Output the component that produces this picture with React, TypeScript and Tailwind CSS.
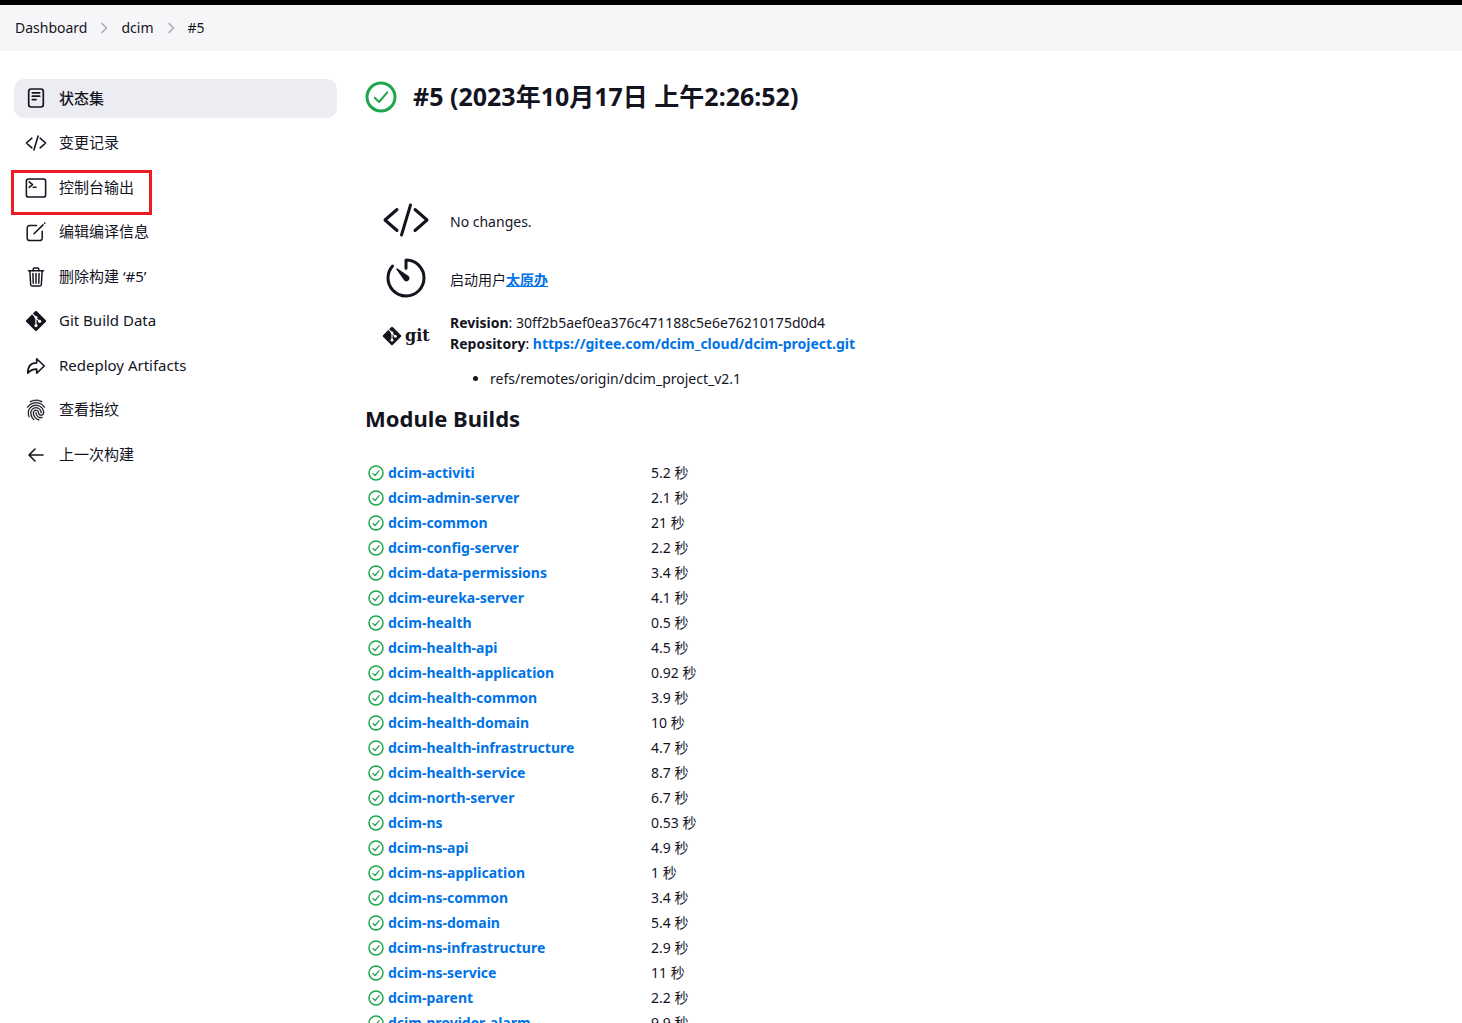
import type { ReactNode } from "react";
import {
  IoCodeSlashOutline,
  IoTerminalOutline,
  IoTrashOutline,
  IoArrowRedoOutline,
  IoFingerPrintOutline,
  IoTimerOutline,
} from "react-icons/io5";

function GitMark({ className }: { className: string }) {
  return (
    <svg viewBox="0 0 24 24" className={className} fill="none" aria-hidden="true">
      <rect x="3.8" y="3.8" width="16.4" height="16.4" rx="1.2" transform="rotate(45 12 12)" fill="currentColor" />
      <path d="M7.8 4 12 8.2V17M12 8.6l3.8 3.8" stroke="#fff" strokeWidth="1.3" />
      <circle cx="12" cy="8.2" r="1.6" fill="#fff" />
      <circle cx="12" cy="17" r="1.7" fill="#fff" />
      <circle cx="16" cy="12.4" r="1.7" fill="#fff" />
    </svg>
  );
}

function StatusPage({ className }: { className: string }) {
  return (
    <svg viewBox="0 0 22 22" className={className} fill="none" stroke="currentColor" strokeWidth="1.7" strokeLinecap="round" aria-hidden="true">
      <rect x="3.7" y="1" width="14.6" height="18" rx="2.4" />
      <path d="M7.3 4.8h7.4M7.3 8.2h7.4M7.3 11.6h3.7" />
    </svg>
  );
}

function EditBox({ className }: { className: string }) {
  return (
    <svg viewBox="0 0 22 22" className={className} fill="none" stroke="currentColor" strokeWidth="1.5" strokeLinecap="round" strokeLinejoin="round" aria-hidden="true">
      <path d="M11.5 4.6H4.6A2.4 2.4 0 0 0 2.2 7v10.2a2.4 2.4 0 0 0 2.4 2.4h10.2a2.4 2.4 0 0 0 2.4-2.4v-7" />
      <path d="M9 12.8 18 3.9M19.6 2.3l.3-.3" />
    </svg>
  );
}

function BackArrow({ className }: { className: string }) {
  return (
    <svg viewBox="0 0 22 22" className={className} fill="none" stroke="currentColor" strokeWidth="1.6" strokeLinecap="round" strokeLinejoin="round" aria-hidden="true">
      <path d="M10 5 4 11l6 6M4.5 11H18" />
    </svg>
  );
}

function Chevron() {
  return (
    <svg viewBox="0 0 14 14" className="mx-2.5 size-3.5" fill="none" stroke="#a9a9bd" strokeWidth="1.6" strokeLinecap="round" strokeLinejoin="round" aria-hidden="true">
      <path d="m5 2.5 4.5 4.5L5 11.5" />
    </svg>
  );
}

function Success({ className, tick }: { className: string; tick: number }) {
  return (
    <svg viewBox="0 0 32 32" className={className} fill="none" stroke="#1ea64b" role="img" aria-label="成功">
      <circle cx="16" cy="16" r="14" strokeWidth="3" />
      <path d="M22.3 11.3 14 21l-4.3-4.3" strokeWidth={tick} strokeLinecap="round" strokeLinejoin="round" />
    </svg>
  );
}

const tasks: { label: string; icon: ReactNode; active?: boolean; marked?: boolean }[] = [
  { label: "状态集", icon: <StatusPage className="size-[22px]" />, active: true },
  { label: "变更记录", icon: <IoCodeSlashOutline className="size-[22px] [&_*]:[stroke-width:38px]" /> },
  { label: "控制台输出", icon: <IoTerminalOutline className="size-[22px] [&_*]:[stroke-width:36px]" />, marked: true },
  { label: "编辑编译信息", icon: <EditBox className="size-[22px]" /> },
  { label: "删除构建 ‘#5’", icon: <IoTrashOutline className="size-[22px] [&_*]:[stroke-width:34px]" /> },
  { label: "Git Build Data", icon: <GitMark className="size-[22px]" /> },
  { label: "Redeploy Artifacts", icon: <IoArrowRedoOutline className="size-[22px] [&_*]:[stroke-width:38px]" /> },
  { label: "查看指纹", icon: <IoFingerPrintOutline className="size-[22px] [&_path]:stroke-current [&_path]:[stroke-width:6px]" /> },
  { label: "上一次构建", icon: <BackArrow className="size-[22px]" /> },
];

const modules: [string, string][] = [
  ["dcim-activiti", "5.2 秒"],
  ["dcim-admin-server", "2.1 秒"],
  ["dcim-common", "21 秒"],
  ["dcim-config-server", "2.2 秒"],
  ["dcim-data-permissions", "3.4 秒"],
  ["dcim-eureka-server", "4.1 秒"],
  ["dcim-health", "0.5 秒"],
  ["dcim-health-api", "4.5 秒"],
  ["dcim-health-application", "0.92 秒"],
  ["dcim-health-common", "3.9 秒"],
  ["dcim-health-domain", "10 秒"],
  ["dcim-health-infrastructure", "4.7 秒"],
  ["dcim-health-service", "8.7 秒"],
  ["dcim-north-server", "6.7 秒"],
  ["dcim-ns", "0.53 秒"],
  ["dcim-ns-api", "4.9 秒"],
  ["dcim-ns-application", "1 秒"],
  ["dcim-ns-common", "3.4 秒"],
  ["dcim-ns-domain", "5.4 秒"],
  ["dcim-ns-infrastructure", "2.9 秒"],
  ["dcim-ns-service", "11 秒"],
  ["dcim-parent", "2.2 秒"],
  ["dcim-provider-alarm", "9.9 秒"],
];

export default function App() {
  return (
    <div className="h-screen overflow-hidden bg-white font-['Noto_Sans','Noto_Sans_CJK_SC',sans-serif] text-sm text-[#14141f]">
      <header className="border-t-[5px] border-black bg-[#f6f6f8]">
        <nav aria-label="Breadcrumb" className="flex h-[46px] items-center px-[15px]">
          <a href="#dashboard">Dashboard</a>
          <Chevron />
          <a href="#dcim">dcim</a>
          <Chevron />
          <a href="#build">#5</a>
        </nav>
      </header>

      <div className="flex pl-3.5 pt-7">
        <nav aria-label="Tasks" className="flex h-[395px] w-[323px] shrink-0 flex-col justify-between text-[15px]">
          {tasks.map((t) => (
            <a
              key={t.label}
              href="#task"
              className={
                t.active
                  ? "relative flex h-[39px] items-center gap-3 rounded-[10px] bg-[#ecedf3] pl-[11px] font-medium"
                  : "relative flex h-[39px] items-center gap-3 rounded-[10px] pl-[11px]"
              }
            >
              {t.icon}
              <span>{t.label}</span>
              {t.marked && (
                <span className="pointer-events-none absolute -left-[3px] top-0.5 h-[45px] w-[141px] border-[3px] border-[#ed1c24]" />
              )}
            </a>
          ))}
        </nav>

        <main className="min-w-0 flex-1 pl-7">
          <h1 className="flex h-9 items-center gap-4 text-[25px] font-bold">
            <Success className="size-8" tick={2} />
            <span>#5 (2023年10月17日 上午2:26:52)</span>
          </h1>

          <div className="mt-[81px] flex flex-col gap-2.5 pl-[17px]">
            <div className="flex h-12 items-center gap-5">
              <IoCodeSlashOutline className="size-12" />
              <p className="pt-1">No changes.</p>
            </div>
            <div className="flex h-12 items-center gap-5">
              <IoTimerOutline className="size-12" />
              <p className="pt-1">
                启动用户
                <a href="#user" className="font-bold text-[#0073e6] underline">
                  太原办
                </a>
              </p>
            </div>
            <div className="flex items-start gap-5">
              <div className="flex h-12 w-12 items-center gap-[3px]">
                <GitMark className="size-5 shrink-0" />
                <span className="font-['DejaVu_Serif',serif] text-base font-bold">git</span>
              </div>
              <div className="leading-[21px]">
                <p>
                  <b>Revision</b>: 30ff2b5aef0ea376c471188c5e6e76210175d0d4
                </p>
                <p>
                  <b>Repository</b>:{" "}
                  <a href="#repository" className="font-bold text-[#0073e6]">
                    https://gitee.com/dcim_cloud/dcim-project.git
                  </a>
                </p>
                <ul className="mt-3.5 list-disc pl-10">
                  <li>refs/remotes/origin/dcim_project_v2.1</li>
                </ul>
              </div>
            </div>
          </div>

          <h2 className="mt-[13px] text-[22px] font-bold leading-8">Module Builds</h2>

          <table className="mt-[26px] border-collapse">
            <tbody>
              {modules.map(([name, time]) => (
                <tr key={name} className="h-[25px]">
                  <td className="w-[286px] p-0 pl-[3px]">
                    <a href="#module" className="flex items-center gap-1 font-bold text-[#0073e6]">
                      <Success className="size-4" tick={2.4} />
                      {name}
                    </a>
                  </td>
                  <td className="p-0">{time}</td>
                </tr>
              ))}
            </tbody>
          </table>
        </main>
      </div>
    </div>
  );
}
